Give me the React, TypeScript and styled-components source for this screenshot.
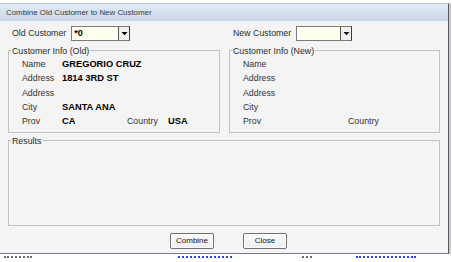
import React from 'react'
import styled, { createGlobalStyle } from 'styled-components'

const GlobalStyle = createGlobalStyle`
  html, body {
    margin: 0;
    padding: 0;
    background: #ffffff;
  }
  body {
    font-family: 'Liberation Sans', Arial, sans-serif;
    color: #2b2b2b;
  }
`

type Info = {
  name?: string
  address1?: string
  address2?: string
  city?: string
  prov?: string
  country?: string
}

const oldCustomer: Info = {
  name: 'GREGORIO CRUZ',
  address1: '1814 3RD ST',
  city: 'SANTA ANA',
  prov: 'CA',
  country: 'USA',
}

const newCustomer: Info = {}

// bits of the page behind the dialog that peek out below it
const peeks = [
  { left: 4, width: 28, color: '#6a6a6a' },
  { left: 146, width: 54, color: '#3344cc' },
  { left: 70, width: 10, color: '#6a6a6a' },
  { left: 44, width: 60, color: '#3344cc' },
]

const Arrow = () => (
  <svg width="7" height="5" viewBox="0 0 7 5">
    <path d="M0.5 1 L6.5 1 L3.5 4.2 Z" fill="#000" />
  </svg>
)

const Combo = ({ value, width }: { value: string; width: number }) => (
  <ComboBox style={{ width }}>
    <ComboText>{value}</ComboText>
    <DropButton>
      <Arrow />
    </DropButton>
  </ComboBox>
)

const InfoGroup = ({ title, info }: { title: string; info: Info }) => (
  <Group>
    <Legend>{title}</Legend>
    <InfoGrid>
      <Label>Name</Label>
      <Value>{info.name}</Value>
      <Label>Address</Label>
      <Value>{info.address1}</Value>
      <Label>Address</Label>
      <Value>{info.address2}</Value>
      <Label>City</Label>
      <Value>{info.city}</Value>
      <Label>Prov</Label>
      <ProvRow>
        <Value>{info.prov}</Value>
        <Label>Country</Label>
        <Value>{info.country}</Value>
      </ProvRow>
    </InfoGrid>
  </Group>
)

const App = () => {
  return (
    <Screen>
      <GlobalStyle />
      <TopStrip />
      <Dialog>
        <TitleBar>Combine Old Customer to New Customer</TitleBar>
        <Body>
          <TopRow>
            <Field>
              <FieldLabel>Old Customer</FieldLabel>
              <Combo value="*0" width={59} />
            </Field>
            <Field>
              <FieldLabel>New Customer</FieldLabel>
              <Combo value="" width={56} />
            </Field>
          </TopRow>
          <Groups>
            <InfoGroup title="Customer Info (Old)" info={oldCustomer} />
            <InfoGroup title="Customer Info (New)" info={newCustomer} />
          </Groups>
          <Results>
            <Legend>Results</Legend>
          </Results>
          <ButtonRow>
            <Button>Combine</Button>
            <Button>Close</Button>
          </ButtonRow>
        </Body>
      </Dialog>
      <BottomStrip>
        {peeks.map((p, i) => (
          <Peek key={i} style={{ marginLeft: p.left, width: p.width, borderColor: p.color }} />
        ))}
      </BottomStrip>
    </Screen>
  )
}

export default App

const Screen = styled.div`
  width: 452px;
  height: 262px;
  overflow: hidden;
  background: #ffffff;
  display: flex;
  flex-direction: column;
`

const TopStrip = styled.div`
  height: 3px;
  background: #ffffff;
`

const Dialog = styled.div`
  width: 449px;
  height: 253px;
  box-sizing: border-box;
  display: flex;
  flex-direction: column;
  background: #f4f4f4;
  border-right: 1px solid #4f5a66;
  border-bottom: 1px solid #6f7b88;
  border-top: 1px solid #b7c6d8;
  box-shadow: 2px 0 0 #c9c9c9;
`

const TitleBar = styled.div`
  height: 17px;
  display: flex;
  align-items: center;
  padding-left: 6px;
  font-size: 7.9px;
  color: #3a3a3a;
  background: linear-gradient(180deg, #e3ebf5 0%, #d3e0ee 55%, #c9d8ea 100%);
`

const Body = styled.div`
  flex: 1;
  display: flex;
  flex-direction: column;
  padding: 0 8px 0 8px;
`

const TopRow = styled.div`
  display: grid;
  grid-template-columns: 221px 1fr;
  margin-top: 5px;
  height: 15px;
`

const Field = styled.div`
  display: flex;
  align-items: center;
  padding-left: 4px;
`

const FieldLabel = styled.span`
  font-size: 8.8px;
  margin-right: 5px;
  white-space: nowrap;
`

const ComboBox = styled.div`
  height: 15px;
  box-sizing: border-box;
  display: flex;
  align-items: stretch;
  background: #fffff0;
  border: 1px solid #7b7b7b;
  border-right-color: #3c3c3c;
`

const ComboText = styled.span`
  flex: 1;
  font-size: 9px;
  font-weight: bold;
  line-height: 13px;
  padding-left: 2px;
  color: #000;
`

const DropButton = styled.span`
  width: 10px;
  display: flex;
  align-items: center;
  justify-content: center;
  background: #f0f0f0;
  border-left: 1px solid #555;
`

const Groups = styled.div`
  display: grid;
  grid-template-columns: 212px 211px;
  gap: 9px;
  margin-top: 5px;
`

const Group = styled.fieldset`
  margin: 0;
  padding: 1px 0 0 0;
  height: 87px;
  box-sizing: border-box;
  border: 1px solid #b9c4c8;
  min-width: 0;
`

const Legend = styled.legend`
  font-size: 8.8px;
  line-height: 10px;
  padding: 0 1px;
  margin-left: 2px;
  color: #2b2b2b;
`

const InfoGrid = styled.div`
  display: grid;
  grid-template-columns: 40px 1fr;
  grid-auto-rows: 14.3px;
  align-items: center;
  padding-left: 13px;
`

const Label = styled.span`
  font-size: 8.8px;
  color: #333;
  white-space: nowrap;
`

const Value = styled.span`
  font-size: 9.3px;
  font-weight: bold;
  color: #000;
  white-space: nowrap;
`

const ProvRow = styled.div`
  display: grid;
  grid-template-columns: 65px 41px 1fr;
  align-items: center;
`

const Results = styled.fieldset`
  margin: 3px 0 0 0;
  padding: 0;
  height: 90px;
  box-sizing: border-box;
  border: 1px solid #b9c4c8;
  min-width: 0;
`

const ButtonRow = styled.div`
  display: flex;
  justify-content: center;
  gap: 29px;
  margin-top: 7px;
  padding-left: 9px;
`

const Button = styled.button`
  height: 16px;
  min-width: 44px;
  padding: 0 5px;
  box-sizing: border-box;
  font-family: 'Liberation Sans', Arial, sans-serif;
  font-size: 8px;
  color: #111;
  background: linear-gradient(180deg, #fbfbfb 0%, #eeeeee 100%);
  border: 1px solid #707070;
  border-radius: 2px;
  box-shadow: inset 0 0 0 1px #ffffff;
`

const BottomStrip = styled.div`
  height: 6px;
  display: flex;
  align-items: flex-start;
  padding-top: 2px;
  background: #ffffff;
`

const Peek = styled.span`
  height: 0;
  border-top: 2px dotted #3344cc;
`
